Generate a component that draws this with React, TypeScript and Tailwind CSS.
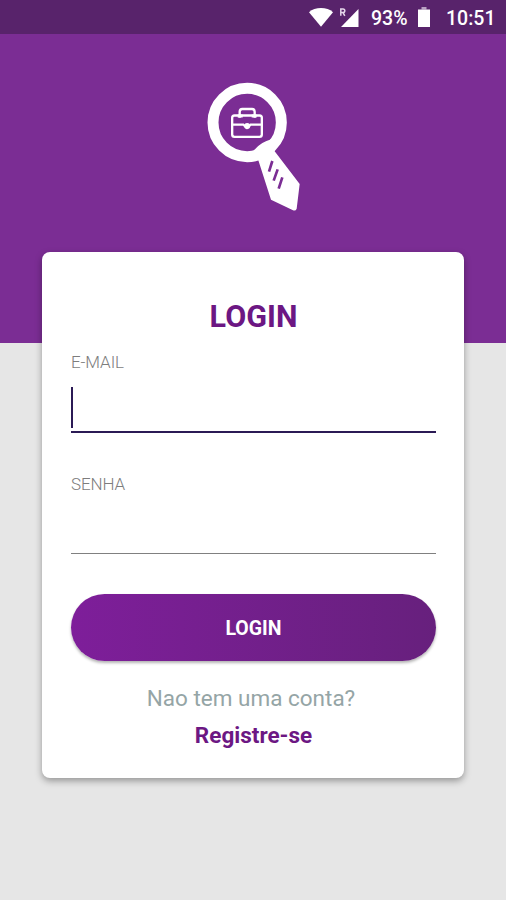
import { useState } from "react";

function StatusBar() {
  return (
    <div className="flex h-[34px] items-center bg-[#58236b] pl-[308px] text-[19.5px] font-medium text-white">
      <svg className="h-[20px] w-[26px] shrink-0" viewBox="0 0 26 20" fill="#fff">
        <path d="M1 5.2C4 2.4 8.400 1 13 1s9 1.400 12 4.200L13 19.800z" />
      </svg>
      <svg className="ml-[4px] h-[22px] w-[22px] shrink-0" viewBox="0 0 22 22" fill="none">
        <path d="M20.500 3V21H3z" fill="#fff" />
        <path d="M2.800 9.800V3H5a1.800 1.800 0 0 1 0 3.600H3M5 6.600L6.800 9.800" stroke="#e6d8ec" strokeWidth="1.500" />
      </svg>
      <span className="ml-[11px] w-[37px] pt-[3px] leading-[34px]">93%</span>
      <svg className="ml-[10px] h-[20px] w-[12px] shrink-0" viewBox="0 0 12 20">
        <path d="M3.500 0h5v2.500h-5z" fill="#b9a0c2" />
        <path d="M0 2.500h12V20H0z" fill="#fff" />
      </svg>
      <span className="ml-[16px] pt-[3px] leading-[34px]">10:51</span>
    </div>
  );
}

function Logo() {
  return (
    <svg className="h-[150px] w-[130px]" viewBox="0 0 390 450" fill="none">
      <circle cx="171.500" cy="157.500" r="102.500" stroke="#fff" strokeWidth="33" />
      <path d="M190 243Q212 216 244 208L254 244L329 342L320 416Q317 424 309 421L243 389L204 268z" fill="#fff" />
      <path d="M247 273L237 305M263 298L251 332M277 322L266 356" stroke="#7b2d94" strokeWidth="8" />
      {/* Briefcase */}
      <g stroke="#fff" strokeWidth="7">
        <rect x="126.500" y="136.500" width="89" height="64" rx="7" />
        <path d="M149 143V125q0-8 8-8h29q8 0 8 8v18" />
        <path d="M127 164h33l11 10 11-10h33" />
        <path d="M143 138h15M185 138h15" strokeWidth="9" />
      </g>
      <circle cx="171.500" cy="168" r="9" fill="#fff" />
    </svg>
  );
}

export default function App() {
  const [email, setEmail] = useState("");
  const [password, setPassword] = useState("");

  return (
    <div className="h-[900px] w-[506px] overflow-hidden bg-[#e6e6e6] font-['Roboto',sans-serif]">
      <StatusBar />

      <header className="flex h-[309px] bg-[#7b2d94] pt-[36px] pl-[190px]">
        <Logo />
      </header>

      <main className="relative mx-auto -mt-[91px] flex h-[526px] w-[422px] flex-col rounded-[8px] bg-white pr-[28px] pl-[29px] shadow-[0_3px_7px_rgba(0,0,0,0.35)]">
        <h1 className="mt-[47px] text-center text-[30.5px] leading-[36px] font-bold text-[#6c1783]">LOGIN</h1>

        <label className="mt-[17px] block text-[17px] leading-[20px] font-light tracking-[-0.1px] text-[#7d7d7d]">
          E-MAIL
          <span className="mt-[15px] flex h-[46px] border-b-2 border-[#2b1a55]">
            {/* Caret of the focused field */}
            {!email && <span className="h-[41px] w-[2px] bg-[#2b1a55]" />}
            <input
              type="email"
              value={email}
              onChange={(e) => setEmail(e.target.value)}
              className="w-full bg-transparent text-[22px] text-gray-800 outline-none"
            />
          </span>
        </label>

        <label className="mt-[41px] block text-[17px] leading-[20px] font-light tracking-[-0.1px] text-[#7d7d7d]">
          SENHA
          <input
            type="password"
            value={password}
            onChange={(e) => setPassword(e.target.value)}
            className="mt-[14px] block h-[46px] w-full border-b border-[#808080] bg-transparent text-[22px] text-gray-800 outline-none"
          />
        </label>

        <button className="mt-[40px] h-[67px] w-full shrink-0 rounded-full bg-linear-to-r from-[#7e1e9a] to-[#67207d] pt-[3px] text-[19.500px] font-bold text-white shadow-[0_2px_3px_rgba(0,0,0,0.3)]">
          LOGIN
        </button>

        <p className="mt-[23px] pr-[5px] text-center text-[22.5px] leading-[28px] text-[#95a5a6]">Nao tem uma conta?</p>
        <a href="#" className="mt-[9px] text-center text-[22.5px] leading-[28px] font-bold text-[#6c1783]">
          Registre-se
        </a>
      </main>
    </div>
  );
}
